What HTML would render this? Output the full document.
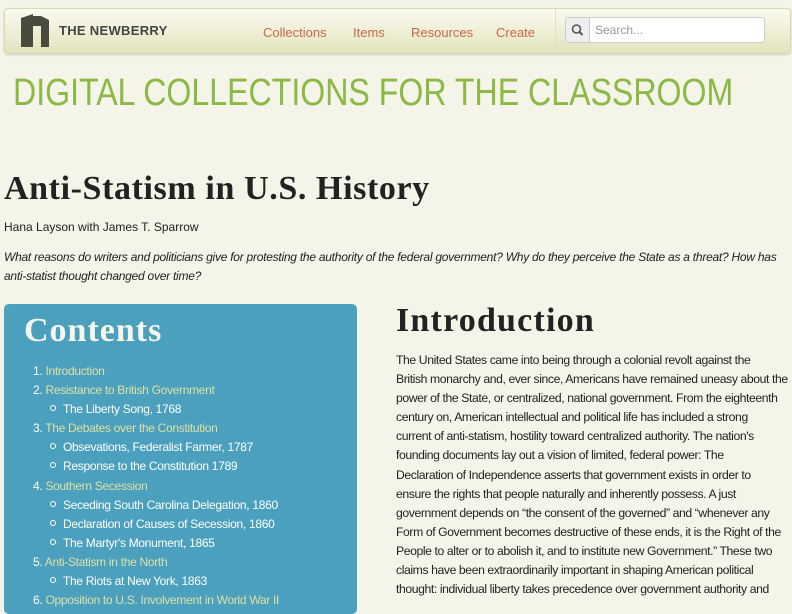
<!DOCTYPE html>
<html><head><meta charset="utf-8"><style>
body{margin:0;background:#f4f4e8;font-family:"Liberation Sans",sans-serif;width:792px;height:600px;overflow:hidden;position:relative;color:#222}
.hdr{position:absolute;left:4px;top:8px;width:785px;height:44px;border:1px solid #d8d8b0;border-radius:4px;background:linear-gradient(#fbfbf0,#e3e3bd);box-shadow:0 1px 2px rgba(0,0,0,.15)}
.logo{position:absolute;left:14px;top:5px}
.logot{position:absolute;left:54px;top:14px;font-weight:bold;font-size:13px;color:#444;letter-spacing:.3px}
.nav{position:absolute;top:16px;font-size:13px;color:#c8684a}
.sep{position:absolute;left:550px;top:0;width:1px;height:44px;background:#e0e0c8}
.sb{position:absolute;left:560px;top:8px;width:198px;height:24px;border:1px solid #ccc;border-radius:3px;background:#fff}
.sb .ic{position:absolute;left:0;top:0;width:23px;height:24px;background:#eee;border-right:1px solid #ccc}
.sb .ph{position:absolute;left:29px;top:5px;font-size:12px;color:#999}
h1.big{position:absolute;left:13px;top:72px;margin:0;font-weight:normal;font-size:38px;color:#8cb845;white-space:nowrap;transform:scaleX(.845);transform-origin:left top}
h2{position:absolute;left:4px;top:170px;margin:0;font-family:"Liberation Serif",serif;font-size:34px;font-weight:bold;color:#222;letter-spacing:.6px}
.au{position:absolute;left:4px;top:220px;font-size:12px}
.q{position:absolute;left:4px;top:248px;width:785px;font-size:12px;font-style:italic;line-height:19px;letter-spacing:-.25px}
.panel{position:absolute;left:4px;top:304px;width:353px;height:310px;background:#4ba0be;border-radius:5px;color:#fff}
.panel h3{margin:0;position:absolute;left:20px;top:8px;font-family:"Liberation Serif",serif;font-size:34px;font-weight:bold;color:#f6f6ea;letter-spacing:1px}
.toc{position:absolute;left:0;top:58px;font-size:12px;line-height:19.1px;letter-spacing:-.3px}
.toc div{white-space:nowrap}
.l1{padding-left:29px}.l1 a{color:#dce1a6}
.l2{padding-left:46px}
.l2:before{content:"";display:inline-block;width:4px;height:4px;border:1px solid #fff;border-radius:50%;margin-right:7px;vertical-align:2px}
h4{position:absolute;left:396px;top:302px;margin:0;font-family:"Liberation Serif",serif;font-size:34px;font-weight:bold;letter-spacing:1.2px}
.txt{position:absolute;left:396px;top:351px;width:500px;font-size:12.2px;line-height:19.1px;color:#222;letter-spacing:-.4px;white-space:nowrap}
</style></head><body>
<div class="hdr">
<svg class="logo" width="34" height="33" viewBox="0 0 34 33"><path d="M2 4 L14 0 L14 2 L22 2 L30 6 L30 33 L22 33 L22 12 L14 12 L14 33 L2 33 Z" fill="#4a4a3e"/></svg>
<div class="logot">THE NEWBERRY</div>
<div class="nav" style="left:258px">Collections</div>
<div class="nav" style="left:348px">Items</div>
<div class="nav" style="left:406px">Resources</div>
<div class="nav" style="left:491px">Create</div>
<div class="sep"></div>
<div class="sb"><div class="ic"><svg width="23" height="24"><circle cx="10.5" cy="11" r="4" fill="none" stroke="#555" stroke-width="1.6"/><path d="M13.5 14 L16.5 17" stroke="#555" stroke-width="2"/></svg></div><div class="ph">Search...</div></div>
</div>
<h1 class="big">DIGITAL COLLECTIONS FOR THE CLASSROOM</h1>
<h2>Anti-Statism in U.S. History</h2>
<div class="au">Hana Layson with James T. Sparrow</div>
<div class="q">What reasons do writers and politicians give for protesting the authority of the federal government? Why do they perceive the State as a threat? How has anti-statist thought changed over time?</div>
<div class="panel"><h3>Contents</h3>
<div class="toc">
<div class="l1">1. <a>Introduction</a></div>
<div class="l1">2. <a>Resistance to British Government</a></div>
<div class="l2">The Liberty Song, 1768</div>
<div class="l1">3. <a>The Debates over the Constitution</a></div>
<div class="l2">Obsevations, Federalist Farmer, 1787</div>
<div class="l2">Response to the Constitution 1789</div>
<div class="l1">4. <a>Southern Secession</a></div>
<div class="l2">Seceding South Carolina Delegation, 1860</div>
<div class="l2">Declaration of Causes of Secession, 1860</div>
<div class="l2">The Martyr's Monument, 1865</div>
<div class="l1">5. <a>Anti-Statism in the North</a></div>
<div class="l2">The Riots at New York, 1863</div>
<div class="l1">6. <a>Opposition to U.S. Involvement in World War II</a></div>
</div></div>
<h4>Introduction</h4>
<div class="txt">The United States came into being through a colonial revolt against the<br>British monarchy and, ever since, Americans have remained uneasy about the<br>power of the State, or centralized, national government. From the eighteenth<br>century on, American intellectual and political life has included a strong<br>current of anti-statism, hostility toward centralized authority. The nation's<br>founding documents lay out a vision of limited, federal power: The<br>Declaration of Independence asserts that government exists in order to<br>ensure the rights that people naturally and inherently possess. A just<br>government depends on “the consent of the governed” and “whenever any<br>Form of Government becomes destructive of these ends, it is the Right of the<br>People to alter or to abolish it, and to institute new Government.” These two<br>claims have been extraordinarily important in shaping American political<br>thought: individual liberty takes precedence over government authority and</div>
</body></html>
